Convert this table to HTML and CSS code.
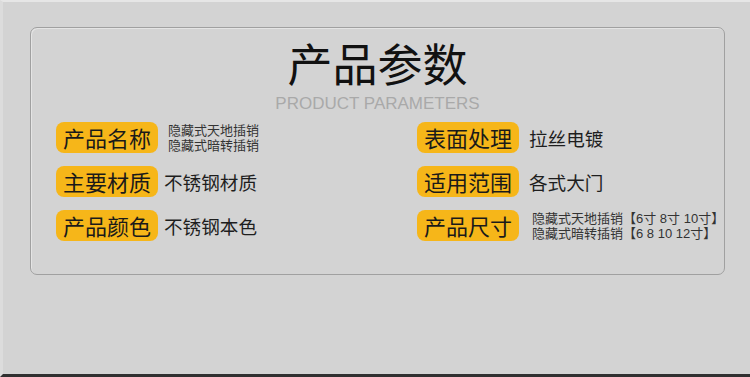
FILE: index.html
```html
<!DOCTYPE html>
<html lang="zh">
<head>
<meta charset="utf-8">
<link rel="stylesheet" href="styles.css">
</head>
<body>
<div class="page">
  <div class="card">
    <h1 class="title">产品参数</h1>
    <div class="subtitle">PRODUCT PARAMETERS</div>
    <div class="grid">
      <div class="item">
        <span class="badge">产品名称</span>
        <div class="small small-left"><div>隐藏式天地插销</div><div>隐藏式暗转插销</div></div>
      </div>
      <div class="item">
        <span class="badge">表面处理</span>
        <span class="value value-right">拉丝电镀</span>
      </div>
      <div class="item">
        <span class="badge">主要材质</span>
        <span class="value">不锈钢材质</span>
      </div>
      <div class="item">
        <span class="badge">适用范围</span>
        <span class="value value-right">各式大门</span>
      </div>
      <div class="item">
        <span class="badge">产品颜色</span>
        <span class="value">不锈钢本色</span>
      </div>
      <div class="item">
        <span class="badge">产品尺寸</span>
        <div class="small small-right"><div>隐藏式天地插销【6寸 8寸 10寸】</div><div>隐藏式暗转插销【6 8 10 12寸】</div></div>
      </div>
    </div>
  </div>
</div>
</body>
</html>
```
FILE: styles.css
```css
html, body {
  margin: 0;
  padding: 0;
}
body {
  background: #d3d3d3;
  font-family: "Noto Sans CJK SC", "Noto Sans", sans-serif;
}
.page {
  box-sizing: border-box;
  width: 750px;
  height: 377px;
  border-top: 2px solid #e6e6e6;
  border-bottom: 3px solid #303030;
  border-left: 3px solid #dcdcdc;
  padding-top: 25px;
  padding-left: 27px;
}
.card {
  box-sizing: border-box;
  width: 695px;
  height: 248px;
  border: 1px solid #a0a0a0;
  border-radius: 7px;
  box-shadow: inset 1px 1px 0 #e4e4e4;
  padding: 0 0 0 25px;
}
.title {
  margin: 0;
  padding-top: 10px;
  padding-right: 25px;
  text-align: center;
  font-weight: 400;
  font-size: 45px;
  line-height: 50px;
  color: #111;
}
.subtitle {
  margin-top: 6px;
  padding-right: 25px;
  text-align: center;
  font-family: "Liberation Sans", Arial, sans-serif;
  font-size: 17px;
  line-height: 20px;
  color: #a9a9a9;
}
.grid {
  display: grid;
  grid-template-columns: 361px 1fr;
  row-gap: 13px;
  margin-top: 8px;
}
.item {
  display: flex;
  align-items: center;
  height: 31px;
}
.badge {
  display: inline-block;
  background: #f6b619;
  border-radius: 8px;
  font-size: 22px;
  line-height: 31px;
  height: 31px;
  padding: 0 7px;
  color: #1a1a1a;
  white-space: nowrap;
}
.value {
  margin-left: 6px;
  font-size: 18.6px;
  line-height: 24px;
  color: #1e1e1e;
}
.value-right {
  margin-left: 10px;
}
.small {
  font-family: "Liberation Sans", "Noto Sans CJK SC", sans-serif;
  font-size: 13px;
  line-height: 15px;
  color: #333;
  white-space: nowrap;
}
.small-left {
  margin-left: 10px;
}
.small-right {
  margin-left: 13px;
}
```
